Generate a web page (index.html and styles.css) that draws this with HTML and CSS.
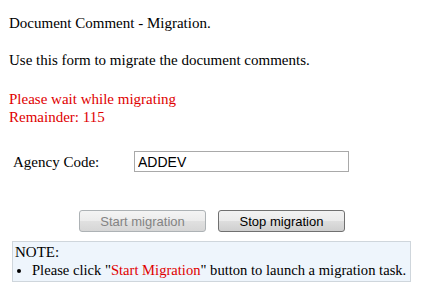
FILE: index.html
```html
<!DOCTYPE html>
<html lang="en">
<head>
    <meta charset="UTF-8">
    <title>Document Comment - Migration</title>
    <link rel="stylesheet" href="styles.css">
</head>
<body>
    <p class="title">Document Comment - Migration.</p>
    <p class="intro">Use this form to migrate the document comments.</p>
    <div class="status">
        <div>Please wait while migrating</div>
        <div>Remainder: 115</div>
    </div>
    <form method="get">
        <div class="field">
            <label for="agencyCode">Agency Code:</label>
            <input type="text" name="agency_code" id="agencyCode" value="ADDEV">
        </div>
        <div class="actions">
            <input class="btn" type="button" value="Start migration" disabled>
            <input class="btn" type="button" value="Stop migration">
        </div>
    </form>
    <div class="note">
        <div>NOTE:</div>
        <ul>
            <li>Please click "<span class="red">Start Migration</span>" button to launch a migration task.</li>
        </ul>
    </div>
</body>
</html>
```

FILE: styles.css
```css
body{
    margin: 0;
    padding: 0 9px;
    background: #fff;
    color: #000;
    font-family: "Liberation Serif", "Times New Roman", serif;
    font-size: 15px;
    line-height: 18px;
}
p{
    margin: 0;
}
.title{
    padding-top: 14px;
}
.intro{
    padding-top: 19px;
}
.status{
    padding-top: 21px;
    color: #e00000;
}
.red{
    color: #e00000;
}

.field{
    display: flex;
    align-items: center;
    margin-top: 25px;
    padding-left: 4px;
}
.field label{
    width: 121px;
}
.field input{
    width: 207px;
    height: 17px;
    margin: 0;
    padding: 1px 3px;
    border: 1px solid #a9a9a9;
    font-family: "Liberation Sans", Arial, sans-serif;
    font-size: 14px;
    color: #000;
}

.actions{
    display: flex;
    gap: 12px;
    margin-top: 38px;
    padding-left: 70px;
}
.btn{
    width: 127px;
    height: 22px;
    margin: 0;
    padding: 0;
    border: 1px solid #707070;
    border-radius: 3px;
    background: linear-gradient(#f2f2f2 0%, #ebebeb 48%, #dddddd 52%, #cfcfcf 100%);
    font-family: "Liberation Sans", Arial, sans-serif;
    font-size: 13px;
    color: #000;
}
.btn:disabled{
    border-color: #adb2b5;
    background: linear-gradient(#f4f4f4 0%, #ececec 48%, #e0e0e0 52%, #d6d6d6 100%);
    color: #838383;
}

.note{
    margin: 9px 0 0 3px;
    width: 395px;
    padding: 1px 0 2px 2px;
    background: #eef5fc;
    border: 1px solid #cfd6dc;
}
.note ul{
    margin: 0;
    padding-left: 17px;
}
.note li{
    white-space: nowrap;
    font-size: 14.6px;
}
```
